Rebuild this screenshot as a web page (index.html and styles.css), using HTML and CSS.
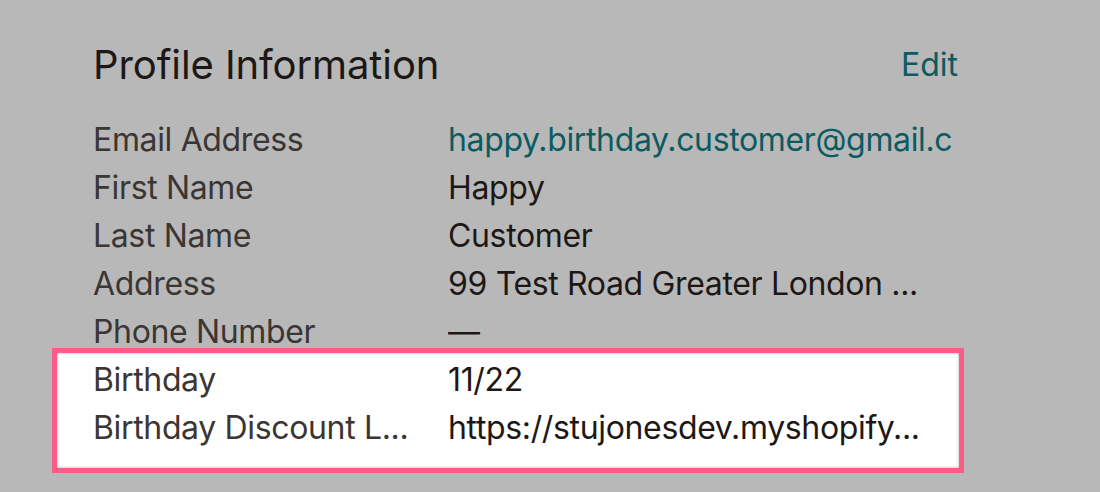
FILE: index.html
```html
<!DOCTYPE html>
<html lang="en">
<head>
<meta charset="utf-8">
<title>Profile Information</title>
<link rel="stylesheet" href="styles.css">
</head>
<body>
<div class="page">
  <section class="card">
    <header class="card-head">
      <h2 class="title">Profile Information</h2>
      <a class="edit" href="#">Edit</a>
    </header>
    <dl class="fields">
      <div class="row"><dt>Email Address</dt><dd class="link">happy.birthday.customer@gmail.c</dd></div>
      <div class="row"><dt>First Name</dt><dd>Happy</dd></div>
      <div class="row"><dt>Last Name</dt><dd>Customer</dd></div>
      <div class="row"><dt>Address</dt><dd>99 Test Road Greater London ...</dd></div>
      <div class="row"><dt>Phone Number</dt><dd>—</dd></div>
      <div class="highlight">
        <div class="row"><dt>Birthday</dt><dd>11/22</dd></div>
        <div class="row"><dt>Birthday Discount L...</dt><dd>https://stujonesdev.myshopify...</dd></div>
      </div>
    </dl>
  </section>
</div>
</body>
</html>
```

FILE: styles.css
```css
html, body {
  margin: 0;
  padding: 0;
  background: #b8b8b8;
}
body {
  font-family: Inter, "Noto Sans", sans-serif;
  width: 1100px;
  height: 492px;
  overflow: hidden;
}
.page {
  padding: 41px 142px 0 93px;
}
.card-head {
  display: flex;
  justify-content: space-between;
  align-items: center;
  height: 48px;
}
.title {
  margin: 0;
  font-size: 40px;
  font-weight: 400;
  letter-spacing: -0.1px;
  color: #1d1816;
  line-height: 48px;
}
.edit {
  font-size: 32px;
  color: #0b5b62;
  text-decoration: none;
  line-height: 48px;
}
.fields {
  margin: 27px 0 0 0;
  padding: 0;
}
.row {
  display: flex;
  height: 48px;
  line-height: 48px;
  font-size: 32px;
  letter-spacing: -0.35px;
}
.row dt {
  flex: 0 0 355px;
  color: #3b3634;
  white-space: nowrap;
}
.row dd {
  margin: 0;
  flex: 1 1 auto;
  min-width: 0;
  color: #1d1816;
  white-space: nowrap;
  overflow: hidden;
}
.row dd.link {
  color: #0b5b62;
}
.highlight {
  margin: -8px -6px 0 -41px;
  padding: 3px 1px 16px 36px;
  background: #fff;
  border: 5px solid #fb5c88;
  box-shadow: inset 0 0 3px rgba(0,0,0,0.35);
}
```
